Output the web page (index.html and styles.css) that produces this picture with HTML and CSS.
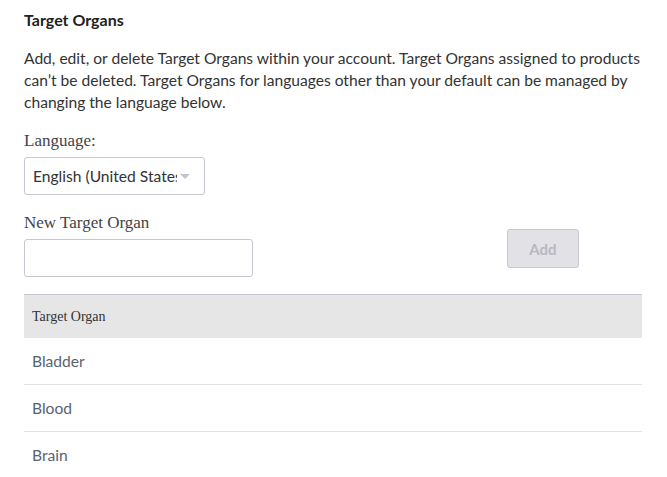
FILE: index.html
```html
<!DOCTYPE html>
<html>
<head>
<meta charset="utf-8">
<link rel="stylesheet" href="styles.css">
</head>
<body>
<div class="page">
  <h1 class="title">Target Organs</h1>
  <p class="desc">Add, edit, or delete Target Organs within your account. Target Organs assigned to products can’t be deleted. Target Organs for languages other than your default can be managed by changing the language below.</p>
  <label class="label">Language:</label>
  <div class="select">
    <span class="select-text">English (United States)</span>
    <span class="caret"></span>
  </div>
  <div class="new-row">
    <div class="new-field">
      <label class="label">New Target Organ</label>
      <div class="input"></div>
    </div>
    <button class="add-btn">Add</button>
  </div>
  <div class="table">
    <div class="thead">Target Organ</div>
    <div class="row">Bladder</div>
    <div class="row">Blood</div>
    <div class="row">Brain</div>
  </div>
</div>
</body>
</html>
```
FILE: styles.css
```css
html, body { margin: 0; padding: 0; background: #fff; }
body { font-family: Lato, "Liberation Sans", sans-serif; color: #333; }
.page { padding: 10px 25px 0 24px; }
.title { font-size: 16px; font-weight: bold; margin: 0; line-height: 20px; color: #222; }
.desc { font-size: 15.6px; line-height: 22px; margin: 17px 0 0 0; color: #333; }
.label { display: block; font-family: "Liberation Serif", serif; font-size: 17px; color: #444; line-height: 20px; margin-top: 18px; }
.select { margin-top: 6px; width: 171px; height: 36px; border: 1px solid #c8c8d0; border-radius: 3px; display: flex; align-items: center; padding-left: 8px; position: relative; overflow: hidden; }
.select-text { font-size: 15.6px; color: #333; white-space: nowrap; overflow: hidden; width: 144px; flex: none; }
.caret { width: 0; height: 0; border-left: 5px solid transparent; border-right: 5px solid transparent; border-top: 5px solid #c4c4c8; margin-left: 3px; }
.new-row { display: flex; align-items: flex-start; }
.new-field { width: 229px; }
.new-field .label { margin-top: 18px; }
.input { margin-top: 6px; height: 36px; border: 1px solid #c8c8d0; border-radius: 3px; width: 227px; }
.add-btn { margin: 34px 0 0 254px; width: 72px; height: 39px; border: 1px solid #c8c8d0; border-radius: 3px; background: #e1e1e6; color: #b8b8c0; font-family: Lato, sans-serif; font-weight: bold; font-size: 15px; }
.table { margin-top: 17px; width: 618px; border-top: 1px solid #c8c8d0; }
.thead { background: #e6e6e6; height: 43px; line-height: 43px; padding-left: 8px; font-family: "Liberation Serif", serif; font-size: 14px; color: #333; }
.row { height: 46px; line-height: 46px; padding-left: 8px; font-size: 15.6px; color: #5a6272; border-bottom: 1px solid #e2e2e6; }
```
